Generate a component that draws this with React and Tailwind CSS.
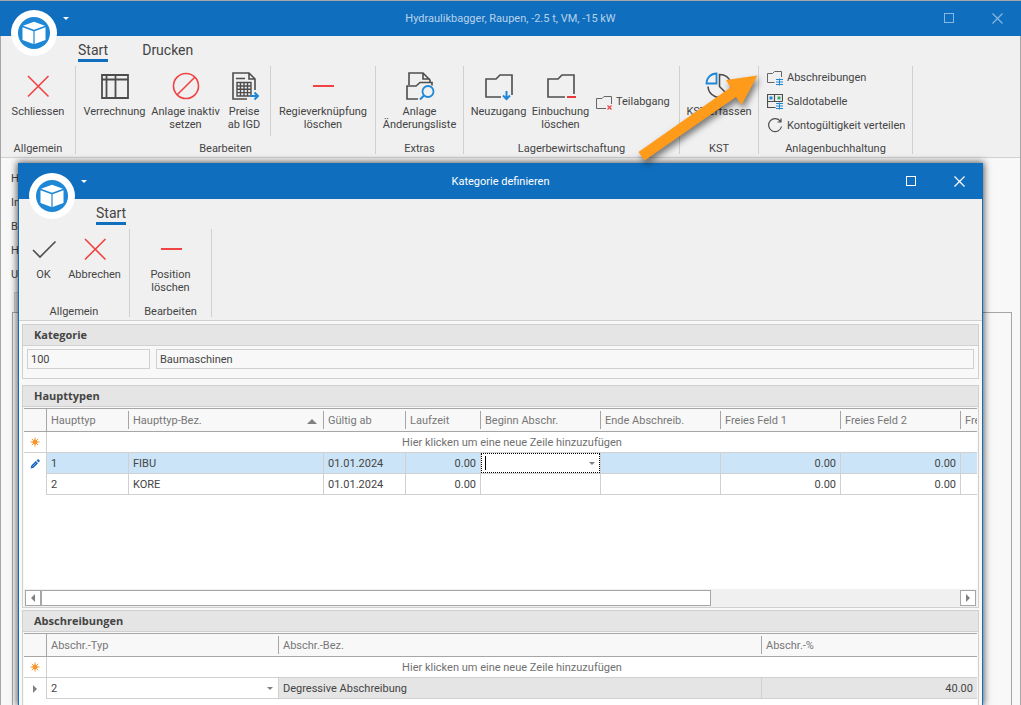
import React, { useState } from "react";

const DARK = "#4d4d4d";
const RED = "#f04343";
const BLUE = "#1e88d6";

function Logo() {
    return (
        <svg className="absolute left-[11px] top-[10px] z-10" width="46" height="46" viewBox="0 0 46 46">
            <circle cx="23" cy="23" r="23" fill="#fff" />
            <circle cx="23" cy="23" r="16" fill={BLUE} />
            <path d="M23 11.7 34 15.7 23 19.7 12 15.7Z" fill="#fff" />
            <path d="M11.5 17.2 22.4 21.2V34L11.5 30Z" fill="#fff" />
            <path d="M34.5 17.2 23.6 21.2V34L34.5 30Z" fill="#fff" />
        </svg>
    );
}

function Icon({ children, size = 32 }) {
    return (
        <svg className="shrink-0" width={size} height={size} viewBox={`0 0 ${size} ${size}`} fill="none" stroke={DARK} strokeWidth="1.6">
            {children}
        </svg>
    );
}

const CloseIcon = () => (
    <Icon><path d="M6 6 26.500 26.500M26.500 6 6 26.500" stroke={RED} /></Icon>
);

const MinusIcon = () => (
    <Icon><path d="M6 16H27" stroke={RED} strokeWidth="2" /></Icon>
);

const CheckIcon = () => (
    <Icon><path d="M5 17 12 24 27.500 8.500" /></Icon>
);

const TableIcon = () => (
    <Icon><path d="M3 5H29V28H3ZM3 9.500H29M7.500 5V28M16.500 5V28" strokeWidth="1.8" /></Icon>
);

const BanIcon = () => (
    <Icon>
        <circle cx="16" cy="16" r="12.500" stroke={RED} />
        <path d="M24.800 7.200 7.200 24.800" stroke={RED} />
    </Icon>
);

const PriceIcon = () => (
    <Icon>
        <path d="M19 29H5V3H21L27 9V20M21 3V9H27M8 8.500H17" />
        <path d="M9 12.500H23V26H9ZM12.500 12.500V26M16 12.500V26M19.500 12.500V26M9 16H23M9 19.300H23M9 22.600H23" strokeWidth="1.4" />
        <path d="M22 26H29.500M26.500 22.500 30 26 26.500 29.500" stroke={BLUE} strokeWidth="2" />
    </Icon>
);

const HistoryIcon = () => (
    <Icon>
        <path d="M5 15V3H19L26 10V12M19 3V9H26" />
        <path d="M14 29H3V16H12L16 12.500H28V15.500" />
        <circle cx="24" cy="21.500" r="5.500" stroke={BLUE} strokeWidth="1.800" />
        <path d="M20 25.500 16 29.500" stroke={BLUE} strokeWidth="2" />
    </Icon>
);

const FolderInIcon = () => (
    <Icon>
        <path d="M18 27H3V9H13L17 5H29V25" />
        <path d="M23.500 21V29M20 25.500 23.500 29 27 25.500" stroke={BLUE} strokeWidth="2" />
    </Icon>
);

const FolderOutIcon = () => (
    <Icon>
        <path d="M20 27H3V9H13L17 5H29V24" />
        <path d="M22 27H31" stroke="#e83a3a" strokeWidth="2" />
    </Icon>
);

const PieIcon = () => (
    <Icon>
        <path d="M13.500 3.500V13.500H3.500A10 10 0 0 1 13.500 3.500Z" stroke={BLUE} strokeWidth="1.8" />
        <path d="M16.500 4.500A11.500 11.500 0 0 1 24.500 24.500L16.500 16.500Z" />
        <path d="M5 16.500A11.500 11.500 0 0 0 24 24.500" />
    </Icon>
);

const FolderXIcon = () => (
    <Icon size={16}>
        <path d="M10 14.500H.5V4.500H6L8 2.500H15.500V10" stroke="#666" strokeWidth="1" />
        <path d="M11.500 11.500 15.500 15.500M15.500 11.500 11.500 15.500" stroke={RED} strokeWidth="1.2" />
    </Icon>
);

const FolderListIcon = () => (
    <Icon size={16}>
        <path d="M7.500 12.500H.5V3.500H5.500L7.500 1.500H14.500V7" stroke="#666" strokeWidth="1" />
        <path d="M9 9.500H16M9 12H16M9 14.500H16M12.500 8.500V15.500" stroke={BLUE} strokeWidth="1" />
    </Icon>
);

const SaldoIcon = () => (
    <Icon size={16}>
        <path d="M8.500 13.500H.5V.5H15.500V7.500M.5 7.500H15.500M7.500.5V7.500" strokeWidth="1.2" />
        <path d="M2.500 2.500H5.500V5.500H2.500Z" fill={BLUE} stroke="none" />
        <path d="M10.500 2.500H13.500V5.500H10.500Z" fill="#3fa66b" stroke="none" />
        <path d="M9 9.500H16M9 12H16M9 14.500H16M12.500 8.500V15.500" stroke={BLUE} strokeWidth="1" />
    </Icon>
);

const RefreshIcon = () => (
    <Icon size={16}>
        <path d="M13.500 3.500A6.500 6.500 0 1 0 14.500 8.500M14 .5V4H10.500" strokeWidth="1.2" />
    </Icon>
);

const NewRowIcon = () => (
    <svg className="mx-auto" width="10" height="10" viewBox="0 0 10 10" stroke="#f7942a" strokeWidth="1">
        <path d="M5 .5V9.500M.5 5H9.500M1.800 1.800 8.200 8.200M8.200 1.800 1.800 8.200" />
        <circle cx="5" cy="5" r="2" fill="#f7942a" />
    </svg>
);

const PencilIcon = () => (
    <svg className="mx-auto" width="10" height="10" viewBox="0 0 10 10" fill="#1565c0">
        <path d="M.5 9.500 1.300 6.500 5.800 2 8 4.200 3.500 8.700ZM6.500 1.300 7.500.4Q8.200 0 8.800.6L9.400 1.200Q10 1.800 9.600 2.500L8.700 3.500Z" />
        <path d="M2.500 7.500 6 4" stroke="#9cc4ec" strokeWidth=".7" />
    </svg>
);

const CaretDown = ({ className }) => (
    <svg className={className} width="6" height="3" viewBox="0 0 6 3" fill="currentColor"><path d="M0 0H6L3 3Z" /></svg>
);

const CaretSide = ({ left }) => (
    <svg className="mx-auto" width="4" height="8" viewBox="0 0 4 8" fill="#808080">
        <path d={left ? "M4 0V8L0 4Z" : "M0 0V8L4 4Z"} />
    </svg>
);

function TitleBar({ title, tone, titleClass, className = "" }) {
    return (
        <header className={`relative flex h-9 items-center bg-[#106ebe] ${className}`}>
            <Logo />
            <button className="ml-[60px] w-3 text-white" aria-label="Schnellzugriff"><CaretDown className="mx-auto" /></button>
            <h1 className={`absolute inset-x-24 pt-[2px] text-center ${titleClass}`}>{title}</h1>
            <div className={`ml-auto flex ${tone}`}>
                <button className="flex h-9 w-12 items-center justify-center" aria-label="Maximieren">
                    <span className="h-[10px] w-[10px] border border-current" />
                </button>
                <button className="flex h-9 w-12 items-center justify-center" aria-label="Fenster schliessen">
                    <svg width="11" height="11" viewBox="0 0 11 11" stroke="currentColor" strokeWidth="1.2"><path d="M.5.5 10.500 10.500M10.500.5.5 10.500" /></svg>
                </button>
            </div>
        </header>
    );
}

function Tabs({ items }) {
    const [active, setActive] = useState(items[0]);
    return (
        <nav className="flex h-[30px] gap-[34px] bg-[#f0f0f0] pl-[77px] pt-[6px]">
            {items.map((item) => (
                <button
                    key={item}
                    onClick={() => setActive(item)}
                    className={`h-5 border-b-3 text-[14px] leading-[17px] ${item === active ? "border-[#106ebe]" : "border-transparent"}`}
                >
                    {item}
                </button>
            ))}
        </nav>
    );
}

function Group({ label, children }) {
    return (
        <>
            <section className="flex flex-col">
                <div className="flex h-[76px] px-1">{children}</div>
                <h2 className="text-center leading-4">{label}</h2>
            </section>
            <div className="h-[88px] w-px bg-[#d0d0d0]" />
        </>
    );
}

function BigButton({ icon, text, width }) {
    return (
        <button className={`flex flex-col items-center pt-1 ${width}`}>
            {icon}
            <span className="mt-[3px] whitespace-pre text-center leading-[13px]">{text}</span>
        </button>
    );
}

function SmallButton({ icon, text }) {
    return (
        <button className="flex h-6 items-center gap-1 whitespace-nowrap px-1">
            {icon}
            {text}
        </button>
    );
}

function Panel({ title, children, className = "" }) {
    return (
        <section className={`border border-[#d0d0d0] ${className}`}>
            <h2 className="h-[21px] border-b border-[#d0d0d0] bg-[#e5e5e5] pl-[11px] font-['Open_Sans'] text-[11px] font-bold leading-5">{title}</h2>
            {children}
        </section>
    );
}

function HeaderRow({ columns }) {
    return (
        <thead>
            <tr className="text-left text-[#777]">
                <th className="h-6 border-y border-r border-[#a6a6a6] bg-[#f8f8f8]" aria-label="Status" />
                {columns.map((col, i) => (
                    <th key={col} className="h-6 overflow-hidden border-y border-[#a6a6a6] bg-[#f8f8f8] p-0 font-normal">
                        <div className={`flex h-[18px] items-center whitespace-nowrap pl-1 pt-[2px] ${i < columns.length - 1 ? "border-r border-[#a6a6a6]" : ""}`}>
                            {col}
                            {col === "Haupttyp-Bez." && (
                                <svg className="ml-auto mr-[6px]" width="10" height="5" viewBox="0 0 10 5" fill="#808080"><path d="M0 5H10L5 0Z" /></svg>
                            )}
                        </div>
                    </th>
                ))}
            </tr>
        </thead>
    );
}

function NewRow({ span }) {
    return (
        <tr>
            <td className="h-[21px] border-b border-r border-[#d0d0d0] p-0"><NewRowIcon /></td>
            <td colSpan={span} className="h-[21px] border-b border-[#d0d0d0] px-0 pb-0 pt-[2px] text-center text-[#707070]">
                Hier klicken um eine neue Zeile hinzuzufügen
            </td>
        </tr>
    );
}

const typen = [
    { nr: "1", bez: "FIBU", ab: "01.01.2024", edit: true },
    { nr: "2", bez: "KORE", ab: "01.01.2024" },
];

const cell = "h-[21px] border-b border-r border-[#d0d0d0] px-1 pb-0 pt-[2px]";

function Haupttypen() {
    return (
        <table className="w-full table-fixed border-separate border-spacing-0">
            <colgroup>
                <col className="w-[23px]" />
                <col className="w-[82px]" />
                <col className="w-[195px]" />
                <col className="w-[82px]" />
                <col className="w-[75px]" />
                <col className="w-[120px]" />
                <col className="w-[120px]" />
                <col className="w-[120px]" />
                <col className="w-[120px]" />
                <col />
            </colgroup>
            <HeaderRow columns={["Haupttyp", "Haupttyp-Bez.", "Gültig ab", "Laufzeit", "Beginn Abschr.", "Ende Abschreib.", "Freies Feld 1", "Freies Feld 2", "Fre"]} />
            <tbody>
                <NewRow span={9} />
                {typen.map((t) => (
                    <tr key={t.nr} className={t.edit ? "bg-[#cce4f7]" : "bg-white"}>
                        <td className="h-[21px] border-r border-[#d0d0d0] bg-white p-0">{t.edit && <PencilIcon />}</td>
                        <td className={cell}>{t.nr}</td>
                        <td className={cell}>{t.bez}</td>
                        <td className={cell}>{t.ab}</td>
                        <td className={`${cell} text-right`}>0.00</td>
                        <td className="h-[21px] border-b border-r border-[#d0d0d0] p-0">
                            {t.edit && (
                                <div className="flex h-5 items-center border border-dotted border-black bg-white pl-[3px] pr-1">
                                    <span className="h-[14px] w-px shrink-0 bg-black" />
                                    <input aria-label="Beginn Abschr." className="h-4 min-w-0 flex-1 outline-none" />
                                    <button aria-label="Datum wählen" className="text-[#808080]"><CaretDown /></button>
                                </div>
                            )}
                        </td>
                        <td className={cell} />
                        <td className={`${cell} text-right`}>0.00</td>
                        <td className={`${cell} text-right`}>0.00</td>
                        <td className="h-[21px] border-b border-[#d0d0d0] p-0" />
                    </tr>
                ))}
            </tbody>
        </table>
    );
}

function Abschreibungen() {
    return (
        <table className="w-full table-fixed border-separate border-spacing-0">
            <colgroup>
                <col className="w-[23px]" />
                <col className="w-[232px]" />
                <col />
                <col className="w-[215px]" />
            </colgroup>
            <HeaderRow columns={["Abschr.-Typ", "Abschr.-Bez.", "Abschr.-%"]} />
            <tbody>
                <NewRow span={3} />
                <tr className="bg-[#e5e5e5]">
                    <td className="h-[21px] border-r border-[#d0d0d0] bg-white p-0"><CaretSide /></td>
                    <td className="relative h-[21px] border-b border-r border-[#d0d0d0] bg-white p-0">
                        <select aria-label="Abschr.-Typ" className="block h-5 w-full appearance-none px-1 pt-[2px] outline-none" defaultValue="2">
                            <option>1</option>
                            <option>2</option>
                        </select>
                        <CaretDown className="pointer-events-none absolute right-[5px] top-[9px] text-[#808080]" />
                    </td>
                    <td className={cell}>Degressive Abschreibung</td>
                    <td className="h-[21px] border-b border-[#d0d0d0] px-1 pb-0 pt-[2px] text-right">40.00</td>
                </tr>
            </tbody>
        </table>
    );
}

function ScrollBar() {
    const box = "h-4 border border-[#a6a6a6] bg-white";
    return (
        <div className="mx-px flex h-[18px] items-center bg-[#f0f0f0] px-px">
            <button aria-label="Nach links" className={`w-4 ${box}`}><CaretSide left /></button>
            <div className={`w-[670px] ${box}`} />
            <button aria-label="Nach rechts" className={`ml-auto w-4 ${box}`}><CaretSide /></button>
        </div>
    );
}

function Dialog() {
    return (
        <div role="dialog" aria-label="Kategorie definieren" className="absolute bottom-0 left-[18px] right-[38px] top-[163px] flex flex-col bg-[#f8f8f8] shadow-[0_0_7px_1px_rgba(0,0,0,0.65)]">
            <TitleBar title="Kategorie definieren" tone="text-white" titleClass="text-white" />
            <div className="flex flex-1 flex-col border-x border-[#106ebe]">
                <Tabs items={["Start"]} />
                <div className="flex h-[92px] border-b border-[#d0d0d0] bg-[#f0f0f0]">
                    <Group label="Allgemein">
                        <BigButton icon={<CheckIcon />} text="OK" width="w-[41px]" />
                        <BigButton icon={<CloseIcon />} text="Abbrechen" width="w-[61px]" />
                    </Group>
                    <Group label="Bearbeiten">
                        <BigButton icon={<MinusIcon />} text={"Position\nlöschen"} width="w-[73px]" />
                    </Group>
                </div>
                <main className="flex flex-1 flex-col px-[3px] pt-[3px]">
                    <Panel title="Kategorie" className="mb-[6px]">
                        <div className="flex gap-[6px] px-1 pb-[9px] pt-[3px]">
                            <input aria-label="Kategorie-Nummer" className="h-5 w-[123px] border border-[#d0d0d0] px-[3px] outline-none" defaultValue="100" />
                            <input aria-label="Bezeichnung" className="h-5 flex-1 border border-[#d0d0d0] px-[3px] outline-none" defaultValue="Baumaschinen" />
                        </div>
                    </Panel>
                    <Panel title="Haupttypen" className="mb-[2px]">
                        <div className="mx-px mt-px h-[181px] bg-white"><Haupttypen /></div>
                        <ScrollBar />
                    </Panel>
                    <Panel title="Abschreibungen" className="flex-1 border-b-0">
                        <div className="mx-px mt-px bg-white pb-2"><Abschreibungen /></div>
                    </Panel>
                </main>
            </div>
        </div>
    );
}

function Arrow() {
    return (
        <svg className="pointer-events-none absolute left-[630px] top-[66px] drop-shadow-[2px_4px_3px_rgba(0,0,0,0.5)]" width="140" height="104" viewBox="630 66 140 104">
            <path d="M757.500 75.500 726 80 730.500 87.500 638.500 152 644.500 160.500 736 97 741.500 105Z" fill="#ff9b1a" />
        </svg>
    );
}

export default function App() {
    return (
        <div className="relative h-screen overflow-hidden font-['Roboto',sans-serif] text-[11px] text-[#444]">
            <TitleBar
                title="Hydraulikbagger, Raupen, -2.5 t, VM, -15 kW"
                tone="text-white/50"
                titleClass="text-white/70"
                className="shadow-[inset_0_1px_#a6a6a6]"
            />
            <div className="min-h-full border-x border-[#a6a6a6] bg-[#f8f8f8]">
                <Tabs items={["Start", "Drucken"]} />
                <div className="flex h-[92px] border-b border-[#d0d0d0] bg-[#f0f0f0]">
                    <Group label="Allgemein">
                        <BigButton icon={<CloseIcon />} text="Schliessen" width="w-[66px]" />
                    </Group>
                    <Group label="Bearbeiten">
                        <BigButton icon={<TableIcon />} text="Verrechnung" width="w-[69px]" />
                        <BigButton icon={<BanIcon />} text={"Anlage inaktiv\nsetzen"} width="w-[73px]" />
                        <BigButton icon={<PriceIcon />} text={"Preise\nab IGD"} width="w-[44px]" />
                        <div className="mx-1 h-[70px] w-px bg-[#d0d0d0]" />
                        <BigButton icon={<MinusIcon />} text={"Regieverknüpfung\nlöschen"} width="w-[96px]" />
                    </Group>
                    <Group label="Extras">
                        <BigButton icon={<HistoryIcon />} text={"Anlage\nÄnderungsliste"} width="w-[79px]" />
                    </Group>
                    <Group label="Lagerbewirtschaftung">
                        <BigButton icon={<FolderInIcon />} text="Neuzugang" width="w-[61px]" />
                        <BigButton icon={<FolderOutIcon />} text={"Einbuchung\nlöschen"} width="w-[63px]" />
                        <div className="flex h-[72px] w-[83px] items-center">
                            <SmallButton icon={<FolderXIcon />} text="Teilabgang" />
                        </div>
                    </Group>
                    <Group label="KST">
                        <BigButton icon={<PieIcon />} text="KST erfassen" width="w-[70px]" />
                    </Group>
                    <Group label="Anlagenbuchhaltung">
                        <div className="flex w-[145px] flex-col items-start">
                            <SmallButton icon={<FolderListIcon />} text="Abschreibungen" />
                            <SmallButton icon={<SaldoIcon />} text="Saldotabelle" />
                            <SmallButton icon={<RefreshIcon />} text="Kontogültigkeit verteilen" />
                        </div>
                    </Group>
                </div>
                <div className="flex flex-col pl-[10px] pt-[9px]">
                    {["H", "In", "B", "H", "U"].map((text, i) => (
                        <span key={i} className="h-6 leading-6">{text}</span>
                    ))}
                </div>
                <div className="ml-[13px] mt-[5px] h-5 w-20 border border-b-0 border-[#d0d0d0] bg-[#e5e5e5]" />
                <div className="ml-[11px] mr-[8px] h-[420px] border border-[#a6a6a6]" />
            </div>
            <Dialog />
            <Arrow />
        </div>
    );
}
